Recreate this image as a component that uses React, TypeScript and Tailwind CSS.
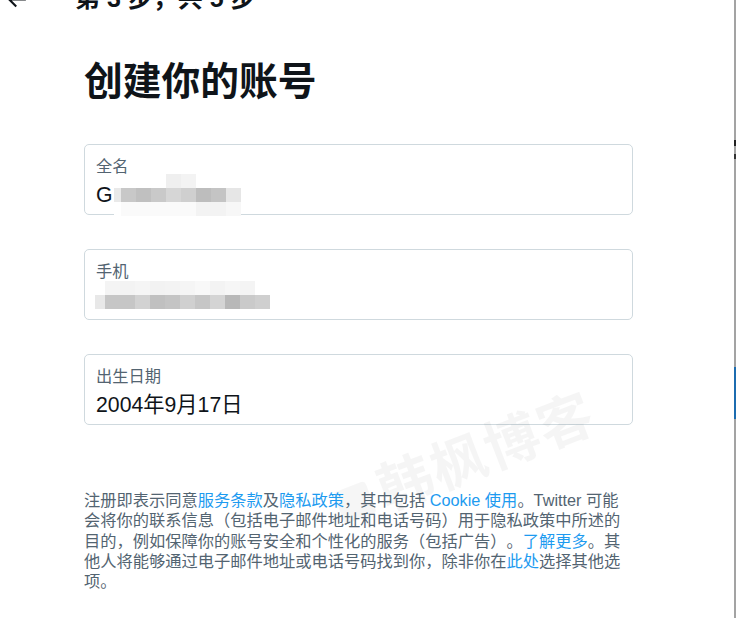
import React from 'react'

const font = { fontFamily: '"Liberation Sans", "Noto Sans CJK SC", sans-serif' }

// mosaic blocks standing in for the blurred personal data
const nameRow = ['#e9e9e9', '#c8c8c8', '#c0c0c0', '#c9c9c9', '#d6d6d6', '#cfcfcf', '#bdbdbd', '#c4c4c4', '#e6e6e6']
const nameTop = ['#ffffff', '#ffffff', '#ffffff', '#ffffff', '#efefef', '#f3f3f3', '#ffffff', '#ffffff', '#ffffff']
const nameBottom = ['#ffffff', '#fafafa', '#fafafa', '#fafafa', '#fafafa', '#fafafa', '#f3f3f3', '#f3f3f3', '#f7f7f7']
const phoneRow = ['#e8e8e8', '#c6c6c6', '#c6c6c6', '#d2d2d2', '#c0c0c0', '#c4c4c4', '#d0d0d0', '#c6c6c6', '#d4d4d4', '#b8b8b8', '#cacaca', '#cfcfcf']
const phoneTop = ['#ffffff', '#f4f4f4', '#f3f3f3', '#f5f5f5', '#f2f2f2', '#f3f3f3', '#f5f5f5', '#f8f8f8', '#f3f3f3', '#f6f6f6', '#f4f4f4', '#ffffff']

function Mosaic({ rows, widths }: { rows: string[][]; widths: number[] }) {
  return (
    <div className="flex flex-col">
      {rows.map((row, r) => (
        <div key={r} className="flex h-[14px]">
          {row.map((c, i) => (
            <div key={i} style={{ background: c, width: widths[i] }} />
          ))}
        </div>
      ))}
    </div>
  )
}

function Field({ label, children }: { label: string; children: React.ReactNode }) {
  return (
    <div className="h-[71px] rounded-[5px] border border-[#cfd9de] px-[11px] pt-[9px]">
      <div className="text-[16.25px] leading-[24px] text-[#536471]">{label}</div>
      <div className="mt-[2px] flex h-[30px] items-center text-[21.25px] leading-[30px] text-[#0f1419]">{children}</div>
    </div>
  )
}

export default function App() {
  const link = 'text-[#1d9bf0]'
  return (
    <div className="relative flex h-[618px] w-[736px] overflow-hidden bg-white [text-spacing-trim:space-all]" style={font}>
      <div className="w-[734px] shrink-0">
        {/* Header */}
        <div className="-mt-[34px] flex h-[66px] items-center">
          <svg viewBox="0 0 24 24" className="ml-[4px] h-[25px] w-[25px] fill-[#0f1419]">
            <path d="M7.414 13l5.043 5.04-1.414 1.42L3.586 12l7.457-7.46 1.414 1.42L7.414 11H21v2H7.414z" />
          </svg>
          <div className="ml-[46px] text-[25px] font-bold text-[#0f1419]">第 3 步，共 5 步</div>
        </div>

        <div className="w-[633px] pl-[84px]">
          <h1 className="mt-[27px] text-[38.75px] font-bold leading-[46px] text-[#0f1419]">创建你的账号</h1>

          <div className="mt-[39px] flex flex-col gap-[34px]">
            <Field label="全名">
              <span>G</span>
              <div className="-my-[14px] ml-[1px]">
                <Mosaic rows={[nameTop, nameRow, nameBottom]} widths={[7, 15, 15, 15, 15, 15, 15, 15, 15]} />
              </div>
            </Field>
            <Field label="手机">
              <div className="-ml-[1px] -mt-[10px]">
                <Mosaic rows={[phoneTop, phoneRow]} widths={[10, 15, 15, 15, 15, 15, 15, 15, 15, 15, 15, 15]} />
              </div>
            </Field>
            <Field label="出生日期">2004年9月17日</Field>
          </div>

          <p className="relative z-10 mt-[65px] whitespace-nowrap text-[16.25px] leading-[20.3px] text-[#536471]">
            注册即表示同意<span className={link}>服务条款</span>及<span className={link}>隐私政策</span>，其中包括{' '}
            <span className={link}>Cookie 使用</span>。Twitter 可能
            <br />
            会将你的联系信息（包括电子邮件地址和电话号码）用于隐私政策中所述的
            <br />
            目的，例如保障你的账号安全和个性化的服务（包括广告）。<span className={link}>了解更多</span>。其
            <br />
            他人将能够通过电子邮件地址或电话号码找到你，除非你在<span className={link}>此处</span>选择其他选
            <br />
            项。
          </p>
        </div>
      </div>

      {/* edge of the page behind the dialog */}
      <div className="flex w-[2px] shrink-0 flex-col bg-[#a3a3a3]">
        <div className="h-[140px]" />
        <div className="h-[6px] bg-[#222]" />
        <div className="h-[8px]" />
        <div className="h-[5px] bg-[#333]" />
        <div className="h-[208px]" />
        <div className="h-[52px] bg-[#1c6cb0]" />
      </div>

      {/* watermark */}
      <div className="pointer-events-none absolute left-[330px] top-[430px] flex -rotate-[21deg] items-center gap-[10px] text-[55px] font-bold leading-[60px] text-[#000]/[0.04]">
        <div className="h-[34px] w-[34px] rounded-[4px] bg-[#000]/[0.035]" />
        <span className="tracking-[2px]">韩枫博客</span>
      </div>
    </div>
  )
}
